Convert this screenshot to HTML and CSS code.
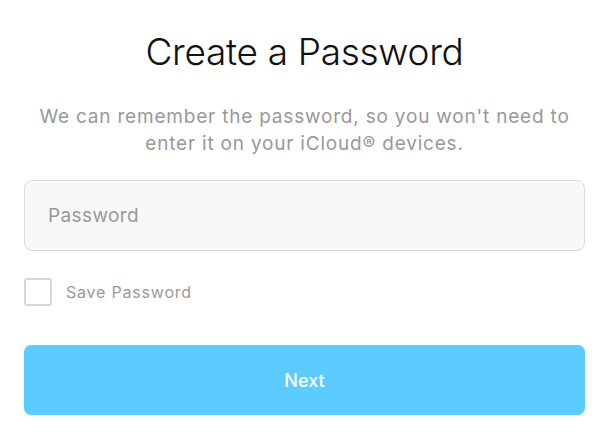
FILE: index.html
```html
<!DOCTYPE html>
<html lang="en">
<head>
    <meta charset="UTF-8">
    <meta name="viewport" content="width=device-width, initial-scale=1.0">
    <title>Create a Password</title>
    <link rel="stylesheet" href="styles.css">
</head>
<body>
    <div class="container">
        <h1>Create a Password</h1>
        <p class="intro">We can remember the password, so you won't need to enter it on your iCloud&reg; devices.</p>

        <form id="password-form">
            <input type="password" class="password-input" placeholder="Password" id="password">

            <label class="save-option">
                <input type="checkbox" id="save-password">
                <span class="box"></span>
                Save Password
            </label>

            <button type="button" id="next-button">Next</button>
        </form>
    </div>
</body>
</html>
```

FILE: styles.css
```css
body {
    font-family: Inter, "Noto Sans", sans-serif;
    background-color: #fff;
    margin: 0;
    padding: 0;
}

.container {
    margin: 0 26px 0 24px;
    padding-top: 30px;
}

h1 {
    font-size: 37px;
    font-weight: 300;
    color: #111;
    text-align: center;
    margin: 0;
    line-height: 44px;
    letter-spacing: -0.3px;
}

.intro {
    font-size: 19px;
    line-height: 27px;
    letter-spacing: 0.8px;
    color: #999;
    text-align: center;
    margin: 29px -4px 0;
}

.password-input {
    display: block;
    box-sizing: border-box;
    width: 100%;
    height: 71px;
    margin-top: 23px;
    padding: 0 23px;
    border: 1px solid #dcdcdc;
    border-radius: 8px;
    background-color: #f8f8f8;
    font-family: inherit;
    font-size: 19px;
    letter-spacing: 0.4px;
    color: #333;
    outline: none;
}

.password-input::placeholder {
    color: #999;
}

.save-option {
    display: flex;
    align-items: center;
    gap: 14px;
    margin-top: 27px;
    font-size: 16px;
    letter-spacing: 0.8px;
    color: #999;
}

.save-option input {
    display: none;
}

.box {
    width: 28px;
    height: 28px;
    box-sizing: border-box;
    border: 2px solid #d8d8d8;
    border-radius: 3px;
}

button {
    display: block;
    width: 100%;
    height: 70px;
    margin-top: 39px;
    border: none;
    border-radius: 7px;
    background-color: #5ccbff;
    color: #fff;
    font-family: inherit;
    font-size: 18px;
    font-weight: 500;
    cursor: pointer;
}
```
